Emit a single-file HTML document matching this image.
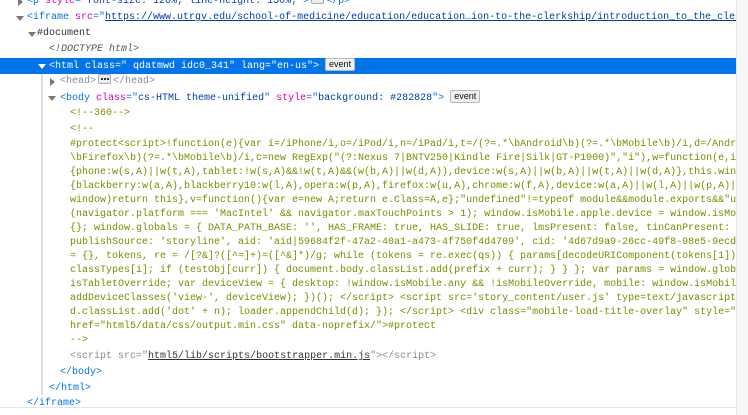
<!DOCTYPE html>
<html><head><style>
body{margin:0;width:748px;height:415px;background:#fff;overflow:hidden;position:relative;font-family:"Liberation Mono",monospace;font-size:10px;}
.l{position:absolute;left:0;right:12px;height:16px;line-height:16px;white-space:pre;color:#5f6fb5;overflow:hidden;}
.c{color:#7f8a00;height:14px;line-height:14px;}
.t{color:#0074e8}
.g{color:#8b8b8b}
.an{color:#dd00a9}
.av{color:#003eaa}
.u{text-decoration:underline}
.tri{position:absolute;width:0;height:0;}
.dn{border-left:4px solid transparent;border-right:4px solid transparent;border-top:5px solid #777;}
.rt{border-top:4px solid transparent;border-bottom:4px solid transparent;border-left:5px solid #777;}
.ev{display:inline-block;font-family:"Liberation Sans",sans-serif;font-size:9px;line-height:11px;padding:0 3px;border:1px solid #bbb;border-radius:2px;background:#eee;color:#111;vertical-align:1px;}
.dots{display:inline-block;position:relative;width:11px;height:8px;border:1px solid #aaa;border-radius:2px;background:#eee;vertical-align:-1px;margin:0 2px;}
.dots::after{content:"";position:absolute;left:2px;top:3px;width:2px;height:2px;background:#333;box-shadow:3px 0 #333,6px 0 #333;}
</style></head><body>
<div style="position:absolute;left:41px;top:74px;width:2px;height:321px;background:#ddd"></div>
<div style="position:absolute;right:0;top:0;width:11px;height:415px;background:#f7f7f7;border-left:1px solid #e6e6e6"></div>
<div style="position:absolute;left:0;top:407px;width:736px;height:1px;background:#e4e4e4"></div>

<div class="l" style="top:-6px;left:27px"><span class="t">&lt;p </span><span class="an">style</span><span class="t">="</span><span class="av">font-size: 120%; line-height: 150%;</span><span class="t">"&gt;</span><span class="dots"></span><span class="t">&lt;/p&gt;</span></div>
<div class="tri rt" style="left:18px;top:-2px"></div>

<div class="tri dn" style="left:16px;top:16px"></div>
<div class="l" style="top:10px;left:27px"><span class="t">&lt;iframe </span><span class="an">src</span><span class="t">="</span><span class="av u">https://www.utrgv.edu/school-of-medicine/education/education…ion-to-the-clerkship/introduction_to_the_clerkship</span></div>

<div class="tri dn" style="left:28px;top:32px"></div>
<div class="l" style="top:26px;left:37px;color:#333">#document</div>

<div class="l" style="top:42px;left:49px;color:#555;font-style:italic">&lt;!DOCTYPE html&gt;</div>

<div style="position:absolute;left:0;top:58px;width:736px;height:16px;background:#0074e8"></div>
<div class="tri" style="left:38px;top:64px;border-left:4px solid transparent;border-right:4px solid transparent;border-top:5px solid #fff"></div>
<div class="l" style="top:58px;left:49px;color:#fff">&lt;html class=" qdatmwd idc0_341" lang="en-us"&gt; <span class="ev" style="background:#f0f0f0">event</span></div>

<div class="tri rt" style="left:50px;top:78px"></div>
<div class="l" style="top:74px;left:60px"><span class="g">&lt;head&gt;</span><span class="dots"></span><span class="g">&lt;/head&gt;</span></div>

<div class="tri dn" style="left:48px;top:96px"></div>
<div class="l" style="top:90px;left:60px"><span class="t">&lt;body </span><span class="an">class</span><span class="t">="</span><span class="av">cs-HTML theme-unified</span><span class="t">" </span><span class="an">style</span><span class="t">="</span><span class="av">background: #282828</span><span class="t">"&gt;</span> <span class="ev">event</span></div>

<div class="l c" style="top:107px;left:70px">&lt;!--360--&gt;</div>
<div class="l c" style="top:123px;left:70px">&lt;!--</div>
<div class="l c" style="top:138px;left:70px">#protect&lt;script&gt;!function(e){var i=/iPhone/i,o=/iPod/i,n=/iPad/i,t=/(?=.*\bAndroid\b)(?=.*\bMobile\b)/i,d=/Andr</div>
<div class="l c" style="top:152px;left:70px">\bFirefox\b)(?=.*\bMobile\b)/i,c=new RegExp("(?:Nexus 7|BNTV250|Kindle Fire|Silk|GT-P1000)","i"),w=function(e,i</div>
<div class="l c" style="top:166px;left:70px">{phone:w(s,A)||w(t,A),tablet:!w(s,A)&amp;&amp;!w(t,A)&amp;&amp;(w(b,A)||w(d,A)),device:w(s,A)||w(b,A)||w(t,A)||w(d,A)},this.win</div>
<div class="l c" style="top:180px;left:70px">{blackberry:w(a,A),blackberry10:w(l,A),opera:w(p,A),firefox:w(u,A),chrome:w(f,A),device:w(a,A)||w(l,A)||w(p,A)|</div>
<div class="l c" style="top:194px;left:70px">window)return this},v=function(){var e=new A;return e.Class=A,e};"undefined"!=typeof module&amp;&amp;module.exports&amp;&amp;"u</div>
<div class="l c" style="top:208px;left:70px">(navigator.platform === 'MacIntel' &amp;&amp; navigator.maxTouchPoints &gt; 1); window.isMobile.apple.device = window.isMo</div>
<div class="l c" style="top:222px;left:70px">{}; window.globals = { DATA_PATH_BASE: '', HAS_FRAME: true, HAS_SLIDE: true, lmsPresent: false, tinCanPresent: </div>
<div class="l c" style="top:236px;left:70px">publishSource: 'storyline', aid: 'aid|59684f2f-47a2-40a1-a473-4f750f4d4709', cid: '4d67d9a9-26cc-49f8-98e5-9ecd</div>
<div class="l c" style="top:250px;left:70px">= {}, tokens, re = /[?&amp;]?([^=]+)=([^&amp;]*)/g; while (tokens = re.exec(qs)) { params[decodeURIComponent(tokens[1])</div>
<div class="l c" style="top:264px;left:70px">classTypes[i]; if (testObj[curr]) { document.body.classList.add(prefix + curr); } } }; var params = window.glob</div>
<div class="l c" style="top:278px;left:70px">isTabletOverride; var deviceView = { desktop: !window.isMobile.any &amp;&amp; !isMobileOverride, mobile: window.isMobil</div>
<div class="l c" style="top:292px;left:70px">addDeviceClasses('view-', deviceView); })(); &lt;/script&gt; &lt;script src='story_content/user.js' type=text/javascript</div>
<div class="l c" style="top:306px;left:70px">d.classList.add('dot' + n); loader.appendChild(d); }); &lt;/script&gt; &lt;div class="mobile-load-title-overlay" style="</div>
<div class="l c" style="top:320px;left:70px">href="html5/data/css/output.min.css" data-noprefix/"&gt;#protect</div>
<div class="l c" style="top:334px;left:70px">--&gt;</div>
<div class="l" style="top:349px;left:70px"><span class="g">&lt;script </span><span class="g">src</span><span class="g">="</span><span class="u" style="color:#333">html5/lib/scripts/bootstrapper.min.js</span><span class="g">"&gt;&lt;/script&gt;</span></div>
<div class="l" style="top:365px;left:60px"><span class="t">&lt;/body&gt;</span></div>
<div class="l" style="top:381px;left:49px"><span class="t">&lt;/html&gt;</span></div>
<div class="l" style="top:396px;left:27px"><span class="t">&lt;/iframe&gt;</span></div>
</body></html>
